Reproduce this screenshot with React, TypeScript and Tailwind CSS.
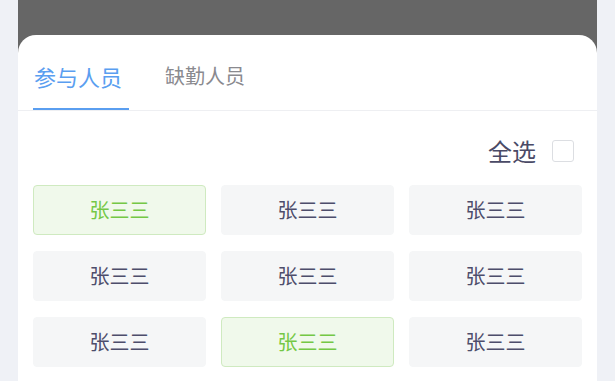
import React from "react";

const people = [
  { name: "张三三", active: true },
  { name: "张三三", active: false },
  { name: "张三三", active: false },
  { name: "张三三", active: false },
  { name: "张三三", active: false },
  { name: "张三三", active: false },
  { name: "张三三", active: false },
  { name: "张三三", active: true },
  { name: "张三三", active: false },
];

const App = () => {
  return (
    <div
      className="w-[615px] h-[381px] overflow-hidden bg-[#eff1f6] px-[18px]"
      style={{ fontFamily: '"Noto Sans CJK SC", "Noto Sans", sans-serif' }}
    >
      <div className="bg-[#666666] h-full">
        <div className="h-[35px]" />
        <div className="bg-white rounded-t-[18px] h-full">
          <div className="flex items-end h-[76px] px-[15px] border-b border-[#eeeff2]">
            <div className="flex flex-col items-start w-[96px]">
              <span className="text-[22px] leading-none text-[#5a9ef0] mb-[21px] ml-[1px]">参与人员</span>
              <div className="h-[2px] w-full bg-[#5a9ef0]" />
            </div>
            <div className="ml-[36px] mb-[21px]">
              <span className="text-[20px] leading-none text-[#8a8a8f]">缺勤人员</span>
            </div>
          </div>
          <div className="flex items-center justify-end h-[74px] pt-[5px] pr-[23px]">
            <span className="text-[24px] text-[#4a4a66] mr-[16px]">全选</span>
            <div className="w-[22px] h-[22px] rounded-[3px] border border-[#dcdee2] bg-white" />
          </div>
          <div className="grid grid-cols-3 gap-x-[15px] gap-y-[16px] px-[15px]">
            {people.map((p, i) => (
              <div
                key={i}
                className={`h-[50px] rounded-[4px] flex items-center justify-center text-[20px] border ${
                  p.active
                    ? "bg-[#f0f9eb] border-[#cfeac0] text-[#74c845]"
                    : "bg-[#f5f6f7] border-[#f5f6f7] text-[#4d4d6b]"
                }`}
              >
                {p.name}
              </div>
            ))}
            <div className="h-[50px] rounded-[4px] border bg-[#f0f9eb] border-[#cfeac0]" />
          </div>
        </div>
      </div>
    </div>
  );
};

export default App;
